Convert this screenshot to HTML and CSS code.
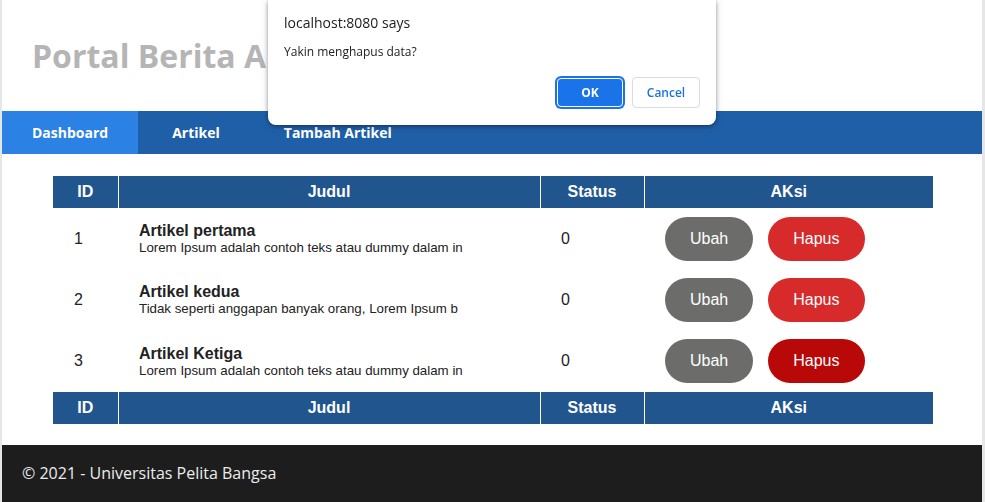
FILE: index.html
```html
<!DOCTYPE html>
<html lang="id">
<head>
<meta charset="utf-8">
<title>Portal Berita</title>
<link rel="stylesheet" href="styles.css">
</head>
<body>
<div class="wrap">
  <header class="masthead">
    <h1 class="brand">Portal Berita Artikel</h1>
  </header>
  <nav class="nav">
    <a class="nav-item active" href="#">Dashboard</a>
    <a class="nav-item" href="#">Artikel</a>
    <a class="nav-item" href="#">Tambah Artikel</a>
  </nav>
  <main class="main">
    <table class="grid">
      <colgroup>
        <col class="c-id"><col class="c-judul"><col class="c-status"><col class="c-aksi">
      </colgroup>
      <thead>
        <tr><th>ID</th><th>Judul</th><th>Status</th><th>AKsi</th></tr>
      </thead>
      <tbody>
        <tr>
          <td>1</td>
          <td><div class="title">Artikel pertama</div><small class="desc">Lorem Ipsum adalah contoh teks atau dummy dalam in</small></td>
          <td>0</td>
          <td><div class="actions"><a class="btn btn-edit" href="#">Ubah</a><a class="btn btn-del" href="#">Hapus</a></div></td>
        </tr>
        <tr>
          <td>2</td>
          <td><div class="title">Artikel kedua</div><small class="desc">Tidak seperti anggapan banyak orang, Lorem Ipsum b</small></td>
          <td>0</td>
          <td><div class="actions"><a class="btn btn-edit" href="#">Ubah</a><a class="btn btn-del" href="#">Hapus</a></div></td>
        </tr>
        <tr>
          <td>3</td>
          <td><div class="title">Artikel Ketiga</div><small class="desc">Lorem Ipsum adalah contoh teks atau dummy dalam in</small></td>
          <td>0</td>
          <td><div class="actions"><a class="btn btn-edit" href="#">Ubah</a><a class="btn btn-del hover" href="#">Hapus</a></div></td>
        </tr>
      </tbody>
      <tfoot>
        <tr><th>ID</th><th>Judul</th><th>Status</th><th>AKsi</th></tr>
      </tfoot>
    </table>
  </main>
  <footer class="footer">&copy; 2021 - Universitas Pelita Bangsa</footer>
</div>

<div class="dialog" role="dialog">
  <div class="dlg-title">localhost:8080 says</div>
  <div class="dlg-msg">Yakin menghapus data?</div>
  <div class="dlg-buttons">
    <button class="dlg-btn dlg-ok">OK</button>
    <button class="dlg-btn dlg-cancel">Cancel</button>
  </div>
</div>
</body>
</html>
```

FILE: styles.css
```css
* { box-sizing: border-box; }
html, body { margin: 0; padding: 0; }
body {
  background: #e6e6e6;
  font-family: "Liberation Sans", Arial, sans-serif;
  color: #222;
}
.wrap {
  width: 980px;
  margin: 0 3px 0 2px;
  background: #fff;
}
.masthead {
  padding: 34px 30px 33px;
}
.brand {
  margin: 0;
  font-family: "Open Sans", sans-serif;
  font-weight: 700;
  font-size: 32px;
  line-height: 44px;
  color: #b5b5b5;
}
.nav {
  display: flex;
  gap: 4px;
  background: #1f5fa8;
}
.nav-item {
  display: block;
  padding: 12px 30px;
  font-family: "Open Sans", sans-serif;
  font-weight: 700;
  font-size: 14px;
  line-height: 19px;
  color: #fff;
  text-decoration: none;
}
.nav-item.active { background: #2c81e4; }

.main {
  padding: 22px 49px 21px 51px;
}
.grid {
  width: 880px;
  border-collapse: collapse;
  table-layout: fixed;
}
.c-id { width: 65px; }
.c-judul { width: 422px; }
.c-status { width: 104px; }
.c-aksi { width: 289px; }
.grid th {
  height: 32px;
  padding: 0;
  background: #21558d;
  color: #fff;
  font-size: 16px;
  font-weight: 700;
  text-align: center;
  border-left: 1px solid #fff;
}
.grid th:first-child { border-left: 0; }
.grid td {
  height: 61.34px;
  padding: 0 20px 0 21px;
  font-size: 16px;
  color: #222;
  vertical-align: middle;
  text-align: left;
}
.title {
  font-weight: 700;
  font-size: 16px;
  line-height: 18px;
  color: #222;
}
.desc {
  display: block;
  font-size: 13.3px;
  line-height: 15px;
  color: #222;
}
.actions {
  display: flex;
  gap: 15px;
}
.btn {
  display: block;
  height: 44px;
  line-height: 44px;
  padding: 0 25px;
  border-radius: 22px;
  color: #fff;
  text-decoration: none;
  font-size: 16px;
}
.btn-edit { background: #6c6d6b; }
.btn-del { background: #d62a2b; }
.btn-del.hover { background: #b90808; }

.footer {
  height: 57px;
  padding: 17px 20px 0;
  background: #1d1d1d;
  color: #ececec;
  font-family: "Open Sans", sans-serif;
  font-size: 16px;
  line-height: 22px;
}

.dialog {
  position: fixed;
  top: 0;
  left: 268px;
  width: 448px;
  height: 125px;
  background: #fff;
  border-radius: 0 0 8px 8px;
  box-shadow: 0 1px 4px rgba(0,0,0,0.35), 0 2px 8px rgba(0,0,0,0.15);
  padding: 13px 16px 0;
  font-family: "Open Sans", sans-serif;
  color: #202124;
}
.dlg-title {
  font-size: 14px;
  line-height: 20px;
}
.dlg-msg {
  margin-top: 11px;
  font-size: 12px;
  line-height: 16px;
}
.dlg-buttons {
  display: flex;
  justify-content: flex-end;
  gap: 8px;
  margin-top: 17px;
}
.dlg-btn {
  width: 68px;
  height: 31px;
  border-radius: 4px;
  font-family: "Open Sans", sans-serif;
  font-size: 12px;
  cursor: pointer;
}
.dlg-ok {
  background: #1a73e8;
  color: #fff;
  font-weight: 700;
  border: 1px solid #fff;
  box-shadow: 0 0 0 2px #1a73e8;
  width: 66px;
  height: 29px;
  margin: 1px 1px 0 0;
}
.dlg-cancel {
  background: #fff;
  color: #1a73e8;
  font-weight: 600;
  border: 1px solid #dadce0;
}
```
